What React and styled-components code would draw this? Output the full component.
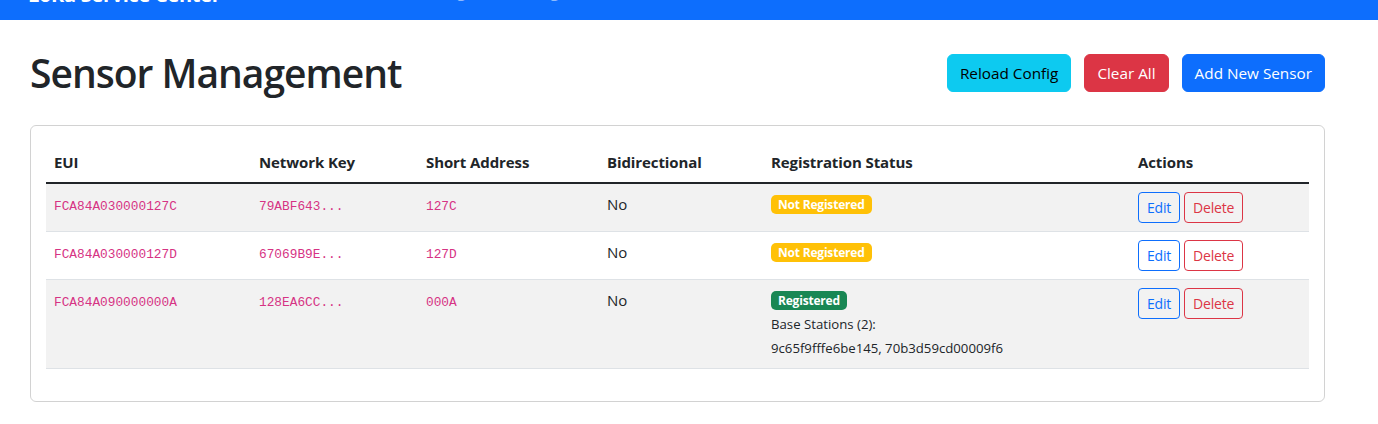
import React from "react";
import styled, { createGlobalStyle } from "styled-components";

const sensors = [
  {
    eui: "FCA84A030000127C",
    key: "79ABF643...",
    short: "127C",
    bidirectional: "No",
    registered: false,
  },
  {
    eui: "FCA84A030000127D",
    key: "67069B9E...",
    short: "127D",
    bidirectional: "No",
    registered: false,
  },
  {
    eui: "FCA84A090000000A",
    key: "128EA6CC...",
    short: "000A",
    bidirectional: "No",
    registered: true,
    baseStations: ["9c65f9fffe6be145", "70b3d59cd00009f6"],
  },
];

function App() {
  return (
    <>
      <GlobalStyle />
      <Navbar>
        <Brand>LoRa Service Center</Brand>
        <NavLinks>
          <NavLink>Dashboard</NavLink>
          <NavLink>Sensors</NavLink>
          <NavLink>Config</NavLink>
          <NavLink>Status Log</NavLink>
        </NavLinks>
      </Navbar>

      <Page>
        <Header>
          <Title>Sensor Management</Title>
          <ButtonGroup>
            <Button $variant="info">Reload Config</Button>
            <Button $variant="danger">Clear All</Button>
            <Button $variant="primary">Add New Sensor</Button>
          </ButtonGroup>
        </Header>

        <Card>
          <Table>
            <colgroup>
              <col style={{ width: 205 }} />
              <col style={{ width: 167 }} />
              <col style={{ width: 181 }} />
              <col style={{ width: 164 }} />
              <col style={{ width: 367 }} />
              <col />
            </colgroup>
            <thead>
              <tr>
                <Th>EUI</Th>
                <Th>Network Key</Th>
                <Th>Short Address</Th>
                <Th>Bidirectional</Th>
                <Th>Registration Status</Th>
                <Th>Actions</Th>
              </tr>
            </thead>
            <tbody>
              {sensors.map((s, i) => (
                <Row key={s.eui} $striped={i % 2 === 0}>
                  <Td>
                    <Code>{s.eui}</Code>
                  </Td>
                  <Td>
                    <Code>{s.key}</Code>
                  </Td>
                  <Td>
                    <Code>{s.short}</Code>
                  </Td>
                  <Td>{s.bidirectional}</Td>
                  <Td>
                    <StatusLine>
                      <Badge $registered={s.registered}>
                        {s.registered ? "Registered" : "Not Registered"}
                      </Badge>
                    </StatusLine>
                    {s.baseStations && (
                      <>
                        <SmallLine>
                          Base Stations ({s.baseStations.length}):
                        </SmallLine>
                        <SmallLine>{s.baseStations.join(", ")}</SmallLine>
                      </>
                    )}
                  </Td>
                  <Td>
                    <Actions>
                      <SmallButton $color="#0d6efd">Edit</SmallButton>
                      <SmallButton $color="#dc3545">Delete</SmallButton>
                    </Actions>
                  </Td>
                </Row>
              ))}
            </tbody>
          </Table>
        </Card>
      </Page>
    </>
  );
}

const GlobalStyle = createGlobalStyle`
  * {
    box-sizing: border-box;
  }

  body {
    margin: 0;
    background: #fff;
    color: #212529;
    font-family: "Open Sans", "Noto Sans", sans-serif;
    font-size: 16px;
    line-height: 1.5;
    overflow: hidden;
  }
`;

const Navbar = styled.nav`
  display: flex;
  align-items: center;
  height: 56px;
  margin-top: -36px;
  padding: 14px 28px 8px;
  background: #0d6efd;
`;

const Brand = styled.div`
  color: #fff;
  font-size: 20px;
  font-weight: 700;
  line-height: 30px;
  margin-right: 16px;
  letter-spacing: -0.3px;
`;

const NavLinks = styled.div`
  display: flex;
  margin-top: -8px;
`;

const NavLink = styled.span`
  padding: 8px;
  color: rgba(255, 255, 255, 0.55);
  font-size: 16px;
`;

const Page = styled.main`
  padding: 29px 53px 0 30px;
`;

const Header = styled.div`
  display: flex;
  justify-content: space-between;
  align-items: center;
  margin-bottom: 28px;
`;

const Title = styled.h1`
  margin: 0;
  font-size: 39px;
  font-weight: 600;
  line-height: 48px;
  letter-spacing: -1px;
  color: #212529;
`;

const ButtonGroup = styled.div`
  display: flex;
  gap: 13px;
`;

const variants = {
  info: { bg: "#0dcaf0", fg: "#000" },
  danger: { bg: "#dc3545", fg: "#fff" },
  primary: { bg: "#0d6efd", fg: "#fff" },
};

const Button = styled.button`
  height: 38px;
  padding: 6px 12px;
  border: 1px solid ${(p) => variants[p.$variant].bg};
  border-radius: 6px;
  background: ${(p) => variants[p.$variant].bg};
  color: ${(p) => variants[p.$variant].fg};
  font-family: inherit;
  font-size: 15.3px;
  line-height: 24px;
  cursor: pointer;
`;

const Card = styled.div`
  border: 1px solid rgba(0, 0, 0, 0.175);
  border-radius: 6px;
  padding: 15px 15px 32px;
`;

const Table = styled.table`
  width: 100%;
  border-collapse: collapse;
  table-layout: fixed;
`;

const Th = styled.th`
  padding: 9px 8px 8px;
  text-align: left;
  font-weight: 700;
  font-size: 15px;
  letter-spacing: -0.1px;
  line-height: 24px;
  border-bottom: 2px solid #212529;
`;

const Row = styled.tr`
  background: ${(p) => (p.$striped ? "#f2f2f2" : "#fff")};
  border-bottom: 1px solid #dee2e6;
`;

const Td = styled.td`
  padding: 8px;
  vertical-align: top;
  line-height: 24px;
  font-size: 15px;
`;

const Code = styled.code`
  font-family: "Liberation Mono", "DejaVu Sans Mono", monospace;
  font-size: 12.8px;
  color: #d63384;
`;

const StatusLine = styled.div`
  display: flex;
  align-items: center;
  height: 24px;
`;

const Badge = styled.span`
  display: inline-block;
  padding: 4px 7px 3px;
  border-radius: 5px;
  background: ${(p) => (p.$registered ? "#198754" : "#ffc107")};
  color: #fff;
  font-size: 12px;
  font-weight: 700;
  line-height: 12px;
  letter-spacing: -0.2px;
`;

const SmallLine = styled.div`
  height: 24px;
  font-size: 13.2px;
  line-height: 24px;
`;

const Actions = styled.div`
  display: flex;
  gap: 4px;
`;

const SmallButton = styled.button`
  height: 31px;
  padding: 4px 8px;
  border: 1px solid ${(p) => p.$color};
  border-radius: 4px;
  background: transparent;
  color: ${(p) => p.$color};
  font-family: inherit;
  font-size: 14px;
  line-height: 21px;
  letter-spacing: -0.2px;
  cursor: pointer;
`;

export default App;
